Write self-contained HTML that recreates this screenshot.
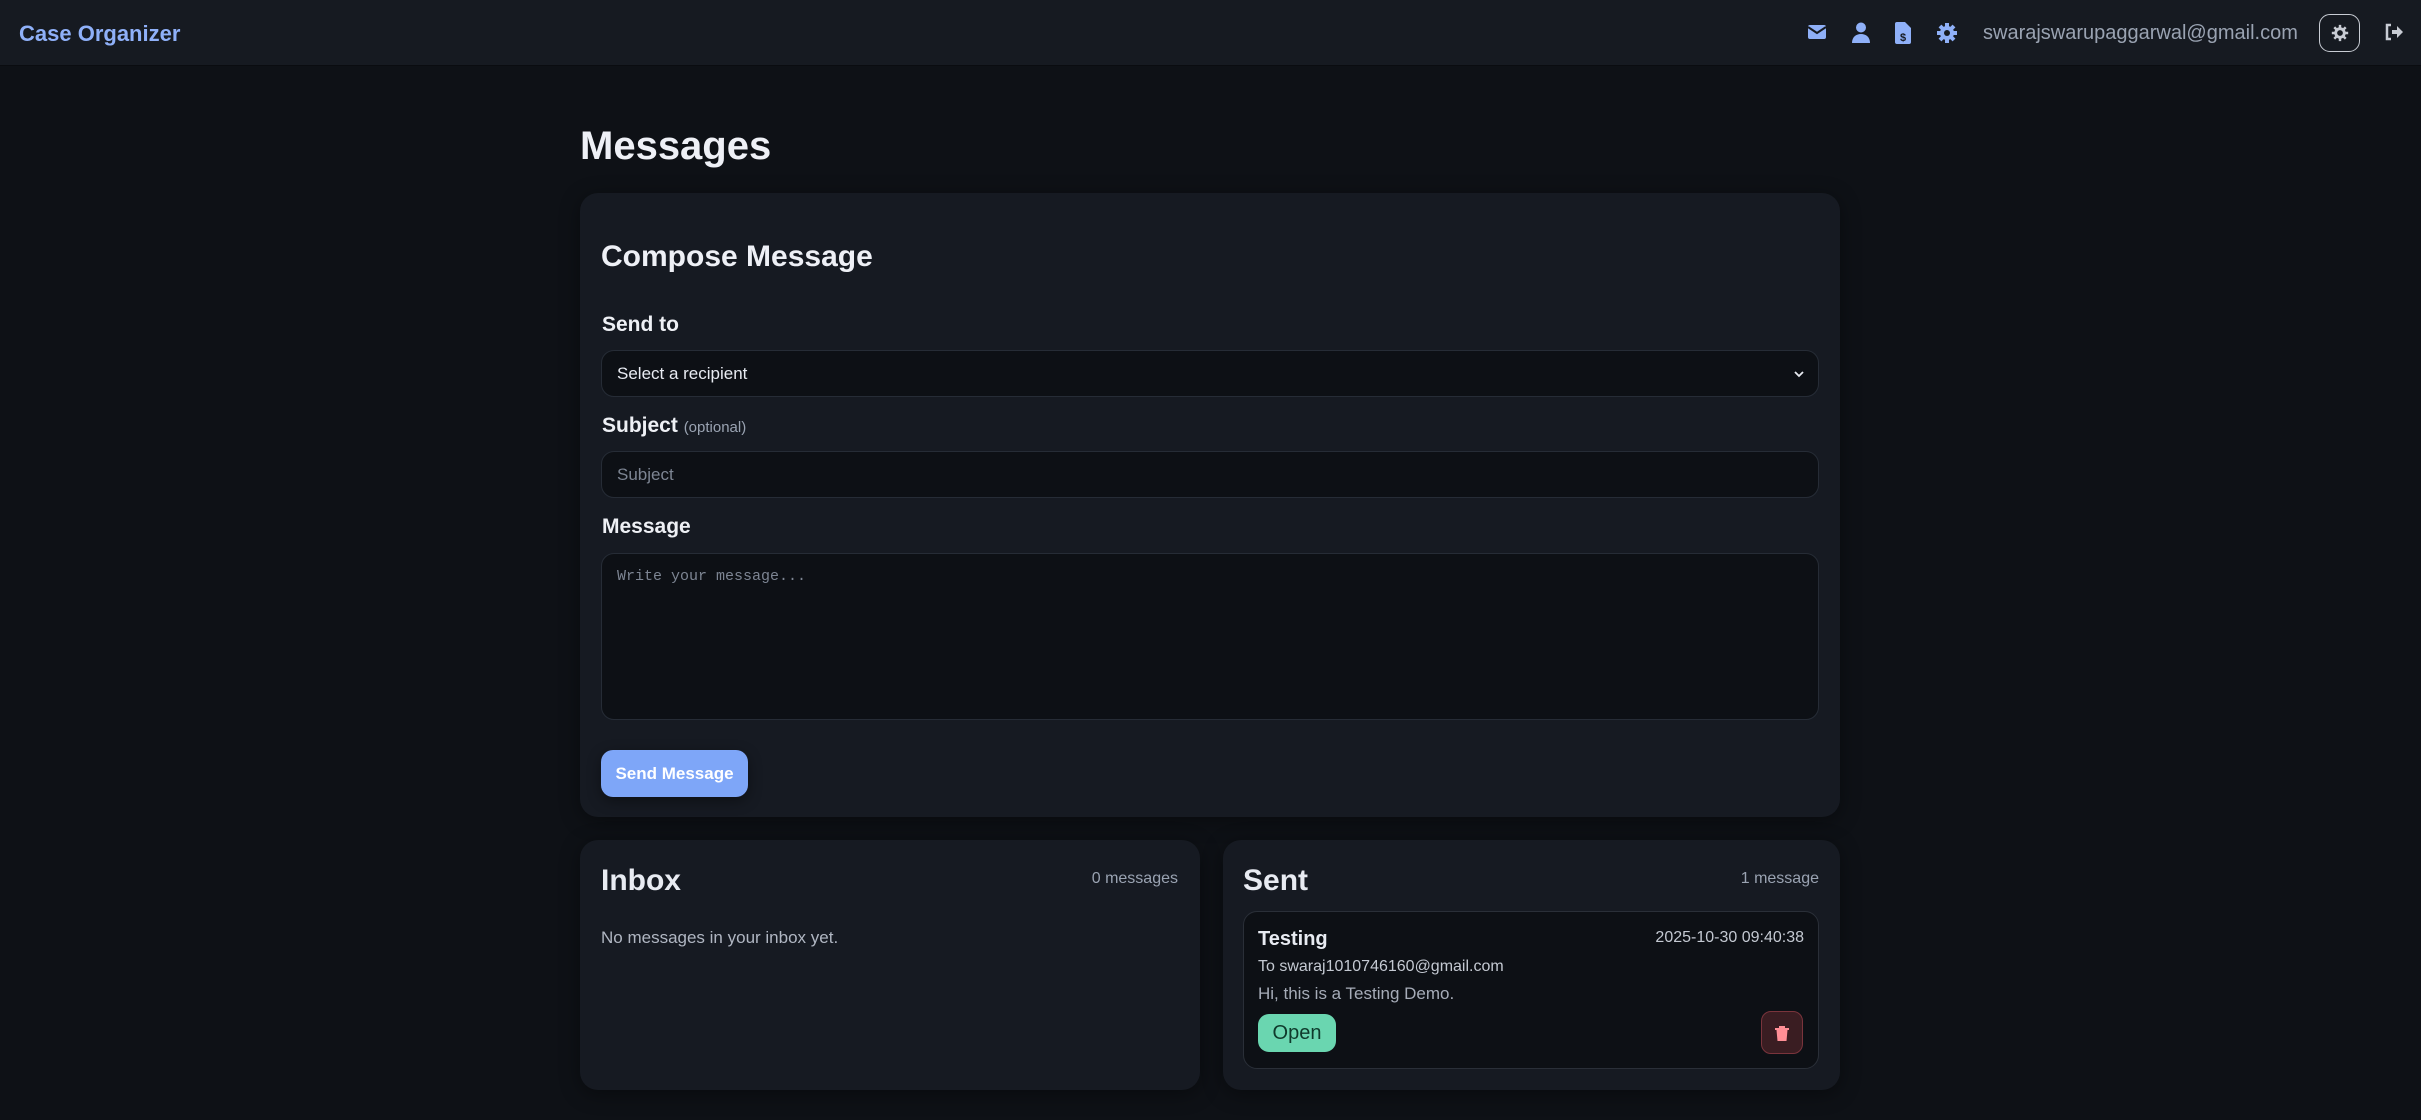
<!DOCTYPE html>
<html><head><meta charset="utf-8"><style>
*{box-sizing:border-box;margin:0;padding:0}
body{width:2421px;height:1120px;background:#0e1116;font-family:"Liberation Sans",sans-serif;color:#e8ebf2;position:relative;overflow:hidden}
.hdr{position:absolute;left:0;top:0;width:2421px;height:66px;background:#161a21;border-bottom:1px solid #0a0c10}
.brand{position:absolute;left:19px;top:21px;font-size:22px;font-weight:bold;color:#8fb0f8}
.ic{position:absolute;top:22px}
.email{position:absolute;left:1983px;top:22px;font-size:20px;color:#9aa3b2}
.theme{position:absolute;left:2319px;top:14px;width:41px;height:38px;border:1.5px solid #c8ccd4;border-radius:11px}
.abs{position:absolute}
.card{position:absolute;background:#161a22;border-radius:18px;box-shadow:0 4px 20px rgba(0,0,0,.4)}
.in{position:absolute;left:601px;width:1218px;background:#0d1015;border:1.5px solid #262c36;border-radius:13px;font-size:17px;padding-left:15px;display:flex;align-items:center}
.lbl{position:absolute;left:602px;font-size:21px;font-weight:bold;color:#eef0f5}
</style></head><body>
<div class="hdr">
<div class="brand">Case Organizer</div>
<svg class="ic" style="left:1807px" width="20" height="20" viewBox="0 0 20 20"><rect x="1" y="3" width="18" height="14" rx="2" fill="#8fb0f8"/><path d="M1 5l9 6 9-6" stroke="#161a21" stroke-width="2" fill="none"/></svg>
<svg class="ic" style="left:1852px" width="18" height="22" viewBox="0 0 18 22"><circle cx="9" cy="5.5" r="5" fill="#8fb0f8"/><path d="M0 21c0-6 4-9 9-9s9 3 9 9z" fill="#8fb0f8"/></svg>
<svg class="ic" style="left:1895px" width="16" height="22" viewBox="0 0 16 22"><path d="M0 2a2 2 0 012-2h8l6 6v14a2 2 0 01-2 2H2a2 2 0 01-2-2z" fill="#8fb0f8"/><text x="8" y="19" font-size="11" font-weight="bold" text-anchor="middle" fill="#161a21" font-family="Liberation Sans">$</text></svg>
<svg class="ic" style="left:1936px" width="22" height="22" viewBox="0 0 22 22"><g fill="#8fb0f8"><circle cx="11" cy="11" r="7"/><g stroke="#8fb0f8" stroke-width="4"><path d="M11 1v20M1 11h20M4 4l14 14M18 4L4 18"/></g></g><circle cx="11" cy="11" r="3" fill="#161a21"/></svg>
<div class="email">swarajswarupaggarwal@gmail.com</div>
<div class="theme"><svg style="position:absolute;left:11px;top:9px" width="18" height="18" viewBox="0 0 22 22"><g fill="#c8ccd4"><circle cx="11" cy="11" r="7"/><g stroke="#c8ccd4" stroke-width="3"><path d="M11 1v20M1 11h20M4 4l14 14M18 4L4 18"/></g></g><circle cx="11" cy="11" r="3.5" fill="#161a21"/></svg></div>
<svg class="ic" style="left:2384px;top:23px" width="20" height="18" viewBox="0 0 20 18"><path d="M7 2H3v14h4" stroke="#c8ccd4" stroke-width="2.5" fill="none"/><path d="M8 7h5V3l6 6-6 6v-4H8z" fill="#c8ccd4"/></svg>
</div>

<div class="abs" style="left:580px;top:124px;font-size:40px;font-weight:bold;color:#eef0f6">Messages</div>

<div class="card" style="left:580px;top:193px;width:1260px;height:624px"></div>
<div class="abs" style="left:601px;top:240px;font-size:30px;font-weight:bold;color:#eef0f6">Compose Message</div>
<div class="lbl" style="top:313px">Send to</div>
<div class="in" style="top:350px;height:47px;color:#e8ebf2">Select a recipient<svg style="position:absolute;right:14px;top:19px" width="10" height="8" viewBox="0 0 10 8"><path d="M1 2l4 4 4-4" stroke="#e8ebf2" stroke-width="1.8" fill="none"/></svg></div>
<div class="lbl" style="top:414px">Subject <span style="font-size:15px;font-weight:normal;color:#9aa3b2">(optional)</span></div>
<div class="in" style="top:451px;height:47px;color:#7d8593">Subject</div>
<div class="lbl" style="top:515px">Message</div>
<div class="in" style="top:553px;height:167px;align-items:flex-start;padding-top:14px;font-family:'Liberation Mono',monospace;font-size:15px;color:#7d8593">Write your message...</div>
<div class="abs" style="left:601px;top:750px;width:147px;height:47px;background:#7ea6f8;border-radius:12px;color:#fff;font-weight:bold;font-size:17px;display:flex;align-items:center;justify-content:center;box-shadow:0 4px 14px rgba(0,0,0,.4)">Send Message</div>

<div class="card" style="left:580px;top:840px;width:620px;height:250px"></div>
<div class="abs" style="left:601px;top:864px;font-size:30px;font-weight:bold">Inbox</div>
<div class="abs" style="left:1000px;width:178px;text-align:right;top:870px;font-size:16px;color:#9aa3b2">0 messages</div>
<div class="abs" style="left:601px;top:928px;font-size:17px;color:#b0b6c2">No messages in your inbox yet.</div>

<div class="card" style="left:1223px;top:840px;width:617px;height:250px"></div>
<div class="abs" style="left:1243px;top:864px;font-size:30px;font-weight:bold">Sent</div>
<div class="abs" style="left:1640px;width:179px;text-align:right;top:870px;font-size:16px;color:#9aa3b2">1 message</div>
<div class="abs" style="left:1243px;top:911px;width:576px;height:158px;background:#0d1015;border:1.5px solid #2a2f38;border-radius:14px"></div>
<div class="abs" style="left:1258px;top:928px;font-size:20px;font-weight:bold">Testing</div>
<div class="abs" style="left:1600px;width:204px;text-align:right;top:929px;font-size:16px;color:#c4c9d2">2025-10-30 09:40:38</div>
<div class="abs" style="left:1258px;top:958px;font-size:16px;color:#c4c9d2">To swaraj1010746160@gmail.com</div>
<div class="abs" style="left:1258px;top:984px;font-size:17px;color:#a6acb8">Hi, this is a Testing Demo.</div>
<div class="abs" style="left:1258px;top:1014px;width:78px;height:38px;background:#6ad6b0;border-radius:11px;color:#0f3a2c;font-size:20px;display:flex;align-items:center;justify-content:center">Open</div>
<div class="abs" style="left:1761px;top:1011px;width:42px;height:43px;background:#3a1d22;border:1.5px solid #7a343c;border-radius:10px"><svg style="position:absolute;left:13px;top:13px" width="14" height="16" viewBox="0 0 14 16"><path d="M0 3h14v2H0zM4 1h6v2H4zM1.5 5h11l-1 11h-9z" fill="#ff8f96"/></svg></div>
</body></html>
